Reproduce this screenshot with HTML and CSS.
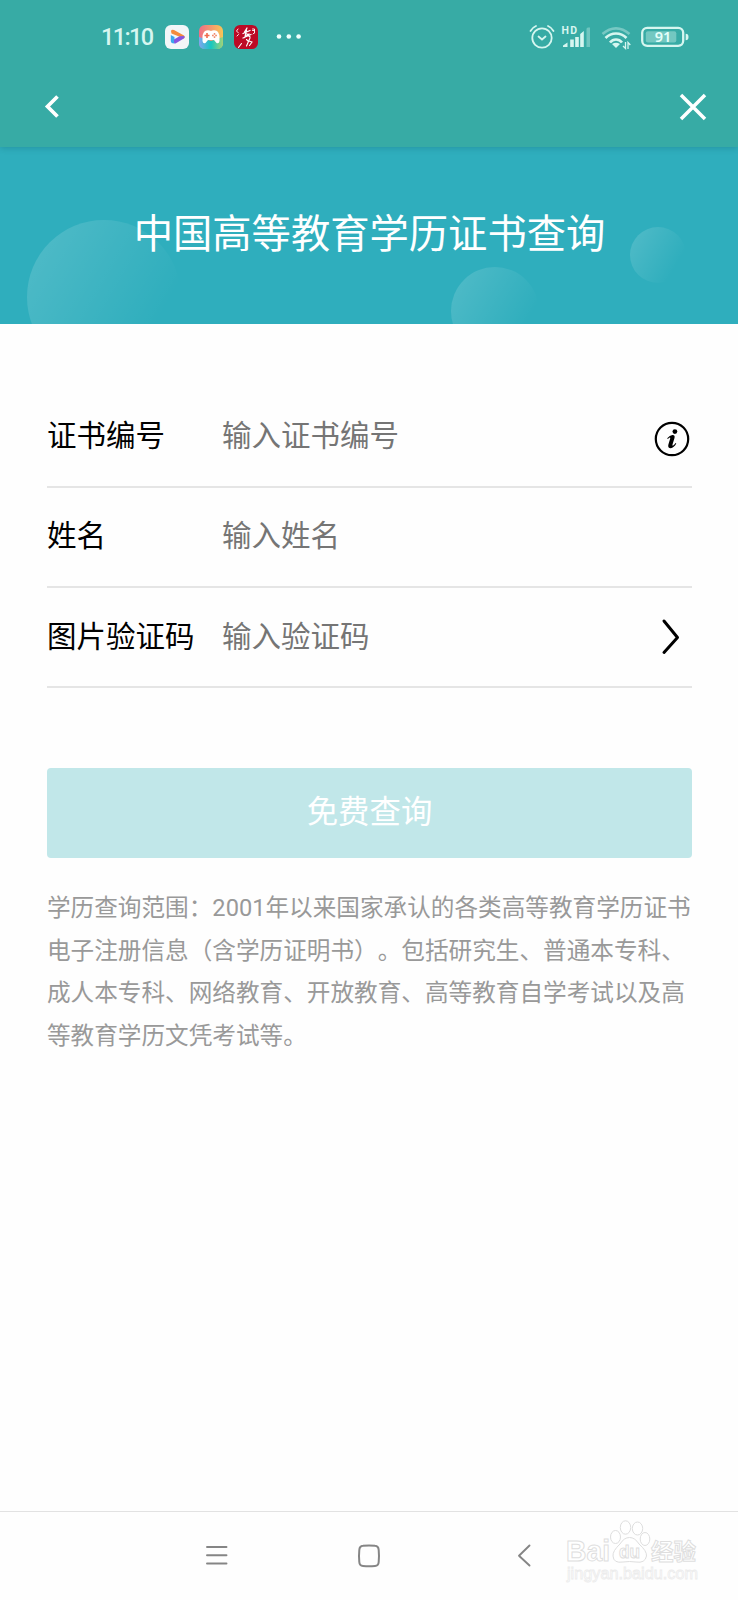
FILE: index.html
```html
<!DOCTYPE html>
<html lang="zh-CN">
<head>
<meta charset="utf-8">
<title>中国高等教育学历证书查询</title>
<link rel="stylesheet" href="styles.css">
</head>
<body>
<div class="screen">
  <header class="header">
    <div class="status">
      <div class="status-left">
        <svg class="clock" width="54" height="24" viewBox="0 0 54 24"><text x="-1" y="20" textLength="53" lengthAdjust="spacing">11:10</text></svg>
        <svg class="app" width="24" height="24" viewBox="0 0 24 24">
          <rect width="24" height="24" rx="6" fill="#f2f6f8"/>
          <path d="M5.800 10L9.500 12V18.500L7.500 18.300Q5.800 18 5.800 16Z" fill="#3aa7ee"/>
          <path d="M6 6Q6.500 4 9 5L19 10.500Q20.500 12 19 13.500L6.500 8.500Z" fill="#f58a3c"/>
          <path d="M14.500 11.200L19.300 11Q20.200 12.500 18.800 13.500L10.500 18.500Q9 19 9 17V14.500Z" fill="#8655e0"/>
        </svg>
        <svg class="app" width="24" height="24" viewBox="0 0 24 24">
          <defs>
            <linearGradient id="g" x1="0" y1="0" x2="1" y2="0"><stop offset="0" stop-color="#ee6e86"/><stop offset="1" stop-color="#f8c557"/></linearGradient>
            <linearGradient id="h" x1="0" y1="0" x2="1" y2="0"><stop offset="0" stop-color="#7fa5f0"/><stop offset=".5" stop-color="#16c7c0"/><stop offset="1" stop-color="#9fd37a"/></linearGradient>
          </defs>
          <rect width="24" height="24" rx="6" fill="url(#g)"/>
          <path d="M0 12L12 16L24 12V18Q24 24 18 24H6Q0 24 0 18Z" fill="url(#h)"/>
          <path d="M6 6Q9 4.500 12 6Q15 4.500 18 6Q21 8 20.500 16Q20 19 17.500 18L15 15H9L6.500 18Q4 19 3.500 16Q3 8 6 6Z" fill="#fff"/>
          <path d="M8 8V13M5.500 10.500H10.500" stroke="#ef6a4e" stroke-width="1.600"/>
          <path d="M15.500 8V13M13 10.500H18" stroke="#f0896b" stroke-width="1.500" stroke-dasharray="1.700 1.500"/>
        </svg>
        <svg class="app" width="24" height="24" viewBox="0 0 24 24">
          <rect width="24" height="24" rx="6" fill="#bd0a25"/>
          <g fill="none" stroke="#fff" stroke-linecap="round">
            <path d="M13 3L10.500 7M9 8.500L16 5.500M12.500 5L11 12L15 9M9 13L17 9.500M13 9L16 12" stroke-width="1.300"/>
            <path d="M12.500 14.500L14 16M16 13L12.500 21M15 16L18 17L15.500 20.500M4.500 22.500L7.500 18.500" stroke-width="1.100"/>
            <path d="M4 4L2.500 6L4.500 8M4.500 9.500L3 11M18.500 4H20.500V8M18.500 5.500H20.500M19 9L20 8" stroke-width=".9"/>
          </g>
        </svg>
        <svg class="more" width="26" height="6" viewBox="0 0 26 6" fill="#f0fffd"><circle cx="3" cy="2.500" r="2.300"/><circle cx="12.800" cy="2.500" r="2.300"/><circle cx="22.600" cy="2.500" r="2.300"/></svg>
      </div>
      <div class="status-right">
        <svg width="26" height="26" viewBox="0 0 26 26" fill="none" stroke="#d6f6f0" stroke-width="1.800" stroke-linecap="round">
          <circle cx="13" cy="14" r="9.700"/><path d="M1.500 7Q3.500 3.500 7 2M19 2Q22.500 3.500 24.500 7M9.500 12.500L13 15.500L16.500 12.500"/>
        </svg>
        <svg class="signal" width="30" height="26" viewBox="0 0 30 26" fill="#d6f6f0">
          <text class="hd" x="-.5" y="9.500" textLength="15.500">HD</text>
          <path d="M1 23V21.500L5.500 18.500V23ZM8.200 23V15.500H11.800V23ZM13.200 23V13H16.800V23ZM18.200 23V10L21.800 7V23Z"/>
          <path d="M24.500 23V5Q24.500 3.500 26 3.500H28V23Z" opacity=".35"/>
        </svg>
        <svg class="wifi" width="30" height="26" viewBox="0 0 30 26" fill="none" stroke="#d6f6f0" stroke-width="2.700">
          <path d="M1.500 10Q8 4.300 15 4.300T28.500 10" opacity=".4"/>
          <path d="M4.500 14Q9 9.500 15 9.500T25.500 14M9 18.500Q11.500 15.500 15 15.500T21 18.500"/>
          <path d="M11 20Q15 17.500 19 20L15 24Z" fill="#d6f6f0" stroke="none"/>
          <path d="M24.500 18V24.500L22 22M27 25V18.500L29.300 21" stroke-width="1.300"/>
        </svg>
        <svg class="battery" width="48" height="22" viewBox="0 0 48 22">
          <rect x="1.200" y="1.800" width="41" height="18" rx="5" fill="none" stroke="#d6f6f0" stroke-width="2.300"/>
          <rect x="4.800" y="5.200" width="30.500" height="11.300" rx="2" fill="#d6f6f0" opacity=".38"/>
          <path d="M44.700 7.800Q47.500 7.800 47.500 11T44.700 14.200Z" fill="#d6f6f0"/>
          <text class="level" x="22" y="16" text-anchor="middle">91</text>
        </svg>
      </div>
    </div>
    <nav class="toolbar">
      <svg width="18" height="28" viewBox="0 0 18 28" fill="none" stroke="#fff" stroke-width="3.700"><path d="M15.500 3.500L5.500 13.500L15.500 23.500"/></svg>
      <svg width="30" height="30" viewBox="0 0 30 30" fill="none" stroke="#fff" stroke-width="3.500"><path d="M3 3L27 27M27 3L3 27"/></svg>
    </nav>
  </header>

  <section class="hero">
    <i class="bubble bubble-large"></i><i class="bubble bubble-medium"></i><i class="bubble bubble-small"></i>
    <h1 class="title">中国高等教育学历证书查询</h1>
  </section>

  <main class="content">
    <div class="row">
      <span class="label">证书编号</span><span class="placeholder">输入证书编号</span>
      <svg class="info" width="36" height="36" viewBox="0 0 36 36"><circle cx="18" cy="18" r="16.200" fill="none" stroke="#000" stroke-width="2.200"/><circle cx="20.900" cy="10.600" r="2.400"/><path d="M13.200 17.300Q15.800 14.300 18.300 14Q21.300 13.800 20.500 17L18.500 23.500Q18.200 25 19.200 24.500Q20.300 23.800 21.600 22L22.300 22.600Q19.800 27 16.800 27.200Q13.400 27.200 14.400 23.500L16.200 17.500Q16.400 16 15.300 16.700L13.800 18Z"/></svg>
    </div>
    <div class="row">
      <span class="label">姓名</span><span class="placeholder">输入姓名</span>
    </div>
    <div class="row">
      <span class="label">图片验证码</span><span class="placeholder">输入验证码</span>
      <svg class="arrow" width="20" height="38" viewBox="0 0 20 38" fill="none" stroke="#000" stroke-width="3" stroke-linecap="round" stroke-linejoin="round"><path d="M3 3L16.500 19.500L3 34.500"/></svg>
    </div>
    <div class="submit">免费查询</div>
    <p class="note">学历查询范围：2001年以来国家承认的各类高等教育学历证书<br>电子注册信息（含学历证明书）。包括研究生、普通本专科、<br>成人本专科、网络教育、开放教育、高等教育自学考试以及高<br>等教育学历文凭考试等。</p>
  </main>

  <footer class="navbar">
    <svg width="22" height="22" viewBox="0 0 22 22" stroke="#858585" stroke-width="1.900" stroke-linecap="round"><path d="M1 2H20.500M1 10.200H20.500M1 18.500H20.500"/></svg>
    <svg class="home" width="24" height="24" viewBox="0 0 24 24" fill="none" stroke="#858585" stroke-width="2"><path d="M6 1.800Q12 1.200 18 1.800Q21.500 2 21.700 6Q22.300 12 21.700 18Q21.500 21.700 18 22Q12 22.600 6 22Q2.500 21.700 2.300 18Q1.700 12 2.300 6Q2.500 2 6 1.800Z"/></svg>
    <svg width="14" height="24" viewBox="0 0 14 24" fill="none" stroke="#858585" stroke-width="1.900" stroke-linecap="round" stroke-linejoin="round"><path d="M12.500 1.500L2 11.700L12.500 21.500"/></svg>
    <svg class="watermark" width="140" height="70" viewBox="0 0 140 70" fill="#fff" stroke="#dedede">
      <text class="brand" x="1" y="41" textLength="44" lengthAdjust="spacingAndGlyphs">Bai</text>
      <g><ellipse cx="50.500" cy="17" rx="5" ry="6.500"/><ellipse cx="60.500" cy="7.500" rx="5.200" ry="6.700"/><ellipse cx="72.500" cy="8.500" rx="5.200" ry="6.500"/><ellipse cx="80" cy="19" rx="4.800" ry="6.500"/>
      <path d="M64.500 17.500Q70 17.500 74 24Q82 31 81.500 36Q80 43.500 71 42Q64.500 41 58 42Q48.500 43.500 48 36Q47.500 31 55 24Q59 17.500 64.500 17.500Z"/></g>
      <text class="du" x="54" y="38" textLength="21" lengthAdjust="spacingAndGlyphs">du</text>
      <text class="cn" x="86" y="40" textLength="45" lengthAdjust="spacingAndGlyphs">经验</text>
      <text class="site" x="2" y="59" textLength="131" lengthAdjust="spacingAndGlyphs">jingyan.baidu.com</text>
    </svg>
  </footer>
</div>
</body>
</html>
```
FILE: styles.css
```css
* { box-sizing: border-box; }
body { margin: 0; background: #fefefe; font-family: Roboto, "Noto Sans CJK SC", sans-serif; text-spacing-trim: space-all; }
svg { display: block; flex: none; overflow: visible; }
.screen { width: 738px; height: 1600px; display: flex; flex-direction: column; overflow: hidden; }

.header { position: relative; z-index: 1; height: 147px; background: #37aba5; box-shadow: 0 1px 6px rgba(0, 55, 65, .22); }
.status { height: 73px; padding: 0 49px 0 102px; display: flex; justify-content: space-between; align-items: center; }
.status-left, .status-right { display: flex; align-items: center; }
.clock { margin-right: 9px; fill: #d6f6f0; font: 500 23.500px Roboto, sans-serif; }
.app { margin-right: 10.300px; }
.more { margin-left: 8px; }
.signal { margin-left: 7px; }
.hd { font: 700 10.500px Roboto, sans-serif; }
.wifi { margin-left: 9px; }
.battery { margin-left: 10px; }
.level { fill: #e4fffa; font: 600 14.500px "Noto Sans", sans-serif; }
.toolbar { height: 68px; padding: 0 30px 0 42px; display: flex; align-items: center; justify-content: space-between; }

.hero { position: relative; height: 177px; display: flex; align-items: center; justify-content: center; background: #2faebd; overflow: hidden; }
.title { position: relative; margin: 0 0 2px 1px; color: #fff; font-size: 39.300px; line-height: 56px; font-weight: 400; white-space: nowrap; }
.bubble { position: absolute; border-radius: 50%; background: linear-gradient(120deg, rgba(255, 255, 255, .17), rgba(255, 255, 255, 0) 78%); }
.bubble-large { left: 27px; top: 73px; width: 154px; height: 154px; }
.bubble-medium { left: 451px; top: 120px; width: 88px; height: 88px; }
.bubble-small { left: 630px; top: 80px; width: 56px; height: 56px; }

.content { flex: 1; padding: 63.300px 46px 0 47px; }
.row { height: 100.400px; padding-bottom: 1px; display: flex; align-items: center; border-bottom: 2px solid #e5e5e5; font-size: 29.500px; line-height: 44px; white-space: nowrap; }
.label { width: 175px; color: #000; }
.placeholder { flex: 1; color: #757575; }
.info { margin: 6px 2px 0 0; }
.arrow { margin-right: 11px; }
.submit { height: 90px; margin-top: 79.500px; padding-bottom: 6px; display: flex; align-items: center; justify-content: center; border-radius: 4px; background: #c1e7e9; color: #fff; font-size: 31.400px; }
.note { margin: 29.200px 0 0; color: #999; font-size: 23.640px; line-height: 42.500px; white-space: nowrap; }

.navbar { position: relative; height: 89px; padding: 0 207px 0 206px; display: flex; align-items: center; justify-content: space-between; border-top: 1px solid #e2e2e2; }
.home { margin-right: 8px; }
.watermark { position: absolute; left: 565px; top: 8px; stroke-width: 1; }
.brand { font: 700 29px "Liberation Sans", sans-serif; }
.du { font: 700 19px "Liberation Sans", sans-serif; }
.cn { font: 700 23px "Noto Sans CJK SC", sans-serif; }
.site { font: 400 16px "Liberation Sans", sans-serif; stroke: #ececec; stroke-width: .8; }
```
